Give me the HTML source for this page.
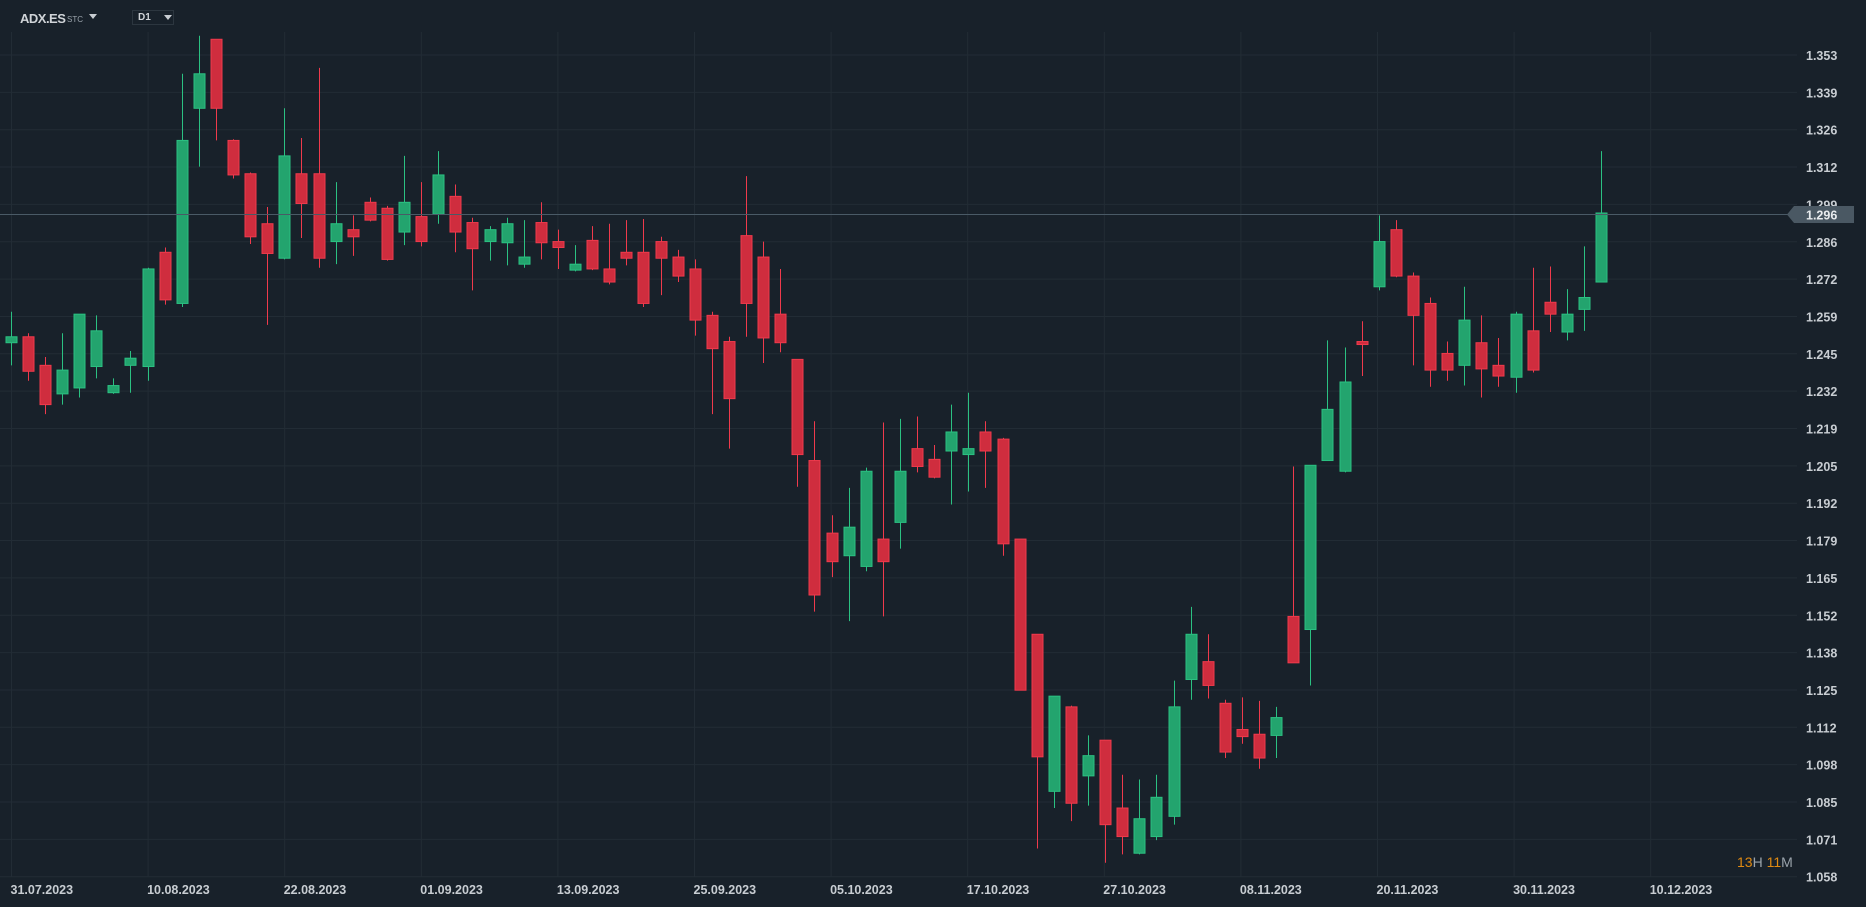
<!DOCTYPE html>
<html><head><meta charset="utf-8"><style>
html,body{margin:0;padding:0;background:#18212a;width:1866px;height:907px;overflow:hidden;font-family:"Liberation Sans",sans-serif}
svg{position:absolute;left:0;top:0}
.hdr{position:absolute;color:#d0d4d8;font-weight:bold}
</style></head><body>
<svg id="c" width="1866" height="907" xmlns="http://www.w3.org/2000/svg"></svg>
<div class="hdr" style="left:20px;top:11px;font-size:13px;letter-spacing:-0.5px">ADX.ES</div>
<div class="hdr" style="left:67px;top:15px;font-size:8px;color:#9aa3ab;font-weight:normal">STC</div>
<div style="position:absolute;left:89px;top:14px;width:0;height:0;border-left:4px solid transparent;border-right:4px solid transparent;border-top:5px solid #c8cdd2"></div>
<div style="position:absolute;left:132px;top:10px;width:42px;height:15px;border:1px solid #2c363f;box-sizing:border-box"></div>
<div class="hdr" style="left:138px;top:12px;font-size:10px">D1</div>
<div style="position:absolute;left:164px;top:15px;width:0;height:0;border-left:4px solid transparent;border-right:4px solid transparent;border-top:5px solid #c8cdd2"></div>
<div style="position:absolute;left:1737px;top:854px;font-size:14px;color:#9aa3ab"><span style="color:#e08a12">13</span>H <span style="color:#e08a12">11</span>M</div>
<script>
var s=document.getElementById('c'),h='';
for(var i=0;i<23;i++){var y=55+i*37.35;h+='<line x1="0" x2="1797" y1="'+y+'" y2="'+y+'" stroke="#222c35" stroke-width="1"/>';}
var dates=["31.07.2023","10.08.2023","22.08.2023","01.09.2023","13.09.2023","25.09.2023","05.10.2023","17.10.2023","27.10.2023","08.11.2023","20.11.2023","30.11.2023","10.12.2023"];
for(var k=0;k<13;k++){var x=11.5+k*136.6;h+='<line x1="'+x+'" x2="'+x+'" y1="32" y2="877" stroke="#222c35" stroke-width="1"/>';
h+='<text x="'+(x-1)+'" y="894" fill="#c8cdd2" font-size="12.5" font-weight="bold" font-family="Liberation Sans, sans-serif">'+dates[k]+'</text>';}
var labs=["1.353","1.339","1.326","1.312","1.299","1.286","1.272","1.259","1.245","1.232","1.219","1.205","1.192","1.179","1.165","1.152","1.138","1.125","1.112","1.098","1.085","1.071","1.058"];
for(var i=0;i<23;i++){h+='<text x="1806" y="'+(55+i*37.35+5)+'" fill="#c8cdd2" font-size="12.5" font-weight="bold" font-family="Liberation Sans, sans-serif">'+labs[i]+'</text>';}
var d=[
["G",262,283,288,307],["R",280,283,312,320],["R",300,307,340,348],["G",280,311,331,340],["G",264,264,326,334],["G",265,278,308,318],["G",318,324,330,331],["G",295,301,307,330],["G",225,226,308,320],["R",208,212,252,256],
["G",62,118,255,258],["G",30,62,91,140],["R",33,33,91,118],["R",117,118,147,150],["R",145,146,199,205],["R",174,188,213,273],["G",91,131,217,218],["R",116,146,171,200],["R",57,146,217,225],["G",153,188,203,222],
["R",181,193,199,215],["R",166,170,185,186],["R",173,175,218,219],["G",131,170,195,206],["R",153,182,203,207],["G",127,147,180,188],["R",155,165,195,212],["R",183,187,209,244],["G",190,193,203,219],["G",183,188,204,223],
["G",185,216,222,225],["R",170,187,204,218],["R",193,203,208,226],["G",206,222,227,228],["R",190,202,226,227],["R",188,226,237,239],["R",185,212,217,223],["R",184,212,255,258],["R",199,203,217,248],["R",210,216,232,237],
["R",218,226,269,282],["R",262,265,293,348],["R",283,287,335,377],["R",148,198,255,283],["R",203,216,284,305],["R",226,264,288,296],["R",302,302,382,409],["R",354,387,500,514],["R",433,448,472,485],["G",410,443,467,522],
["G",393,396,476,480],["R",355,453,472,518],["G",352,396,439,461],["R",350,377,392,397],["R",374,386,401,402],["G",340,363,379,424],["G",330,377,382,413],["R",354,363,379,410],["R",368,369,457,467],["R",453,453,580,580],
["R",533,533,636,713],["G",585,585,665,679],["R",593,594,675,690],["G",618,635,652,677],["R",622,622,693,725],["R",651,679,703,718],["G",655,688,717,718],["G",651,670,703,706],["G",572,594,686,693],["G",510,533,571,588],
["R",533,556,576,587],["R",588,591,632,637],["R",586,613,619,625],["R",589,617,637,646],["G",594,603,618,637],["R",392,518,557,557],["G",391,391,529,576],["G",286,344,387,387],["G",292,321,396,397],["R",270,287,289,316],
["G",181,203,241,244],["R",185,193,232,233],["R",229,232,265,307],["R",250,255,311,325],["R",287,297,311,320],["G",241,269,307,324],["R",265,288,310,334],["R",284,307,316,325],["G",262,264,317,330],["R",225,278,311,313],
["R",224,254,264,279],["G",243,264,279,286],["G",207,250,260,278],["G",127,179,237,237]];
var f=1.19;
for(var i=0;i<d.length;i++){var c=d[i],x=Math.round(10.7+i*17.1)+0.5,g=c[0]=="G";
var fill=g?"#23a46e":"#cf2d3e",st=g?"#2bc182":"#ef3a4c";
var hy=c[1]*f,ty=c[2]*f,by=c[3]*f,ly=c[4]*f;if(by-ty<3){by=ty+3;}
h+='<line x1="'+x+'" x2="'+x+'" y1="'+hy+'" y2="'+ly+'" stroke="'+st+'" stroke-width="1"/>';
h+='<rect x="'+(x-5.5)+'" y="'+ty+'" width="11" height="'+(by-ty)+'" fill="'+fill+'" stroke="'+st+'" stroke-width="1"/>';}
h+='<line x1="0" x2="1794" y1="214.5" y2="214.5" stroke="#4a5a66" stroke-width="1"/>';
h+='<path d="M1794 206 L1854 206 L1854 223 L1794 223 L1787 214.5 Z" fill="#4a5863"/>';
h+='<text x="1806" y="219.5" fill="#e8ebee" font-size="12.5" font-weight="bold" font-family="Liberation Sans, sans-serif">1.296</text>';
s.innerHTML=h;
</script>
</body></html>
